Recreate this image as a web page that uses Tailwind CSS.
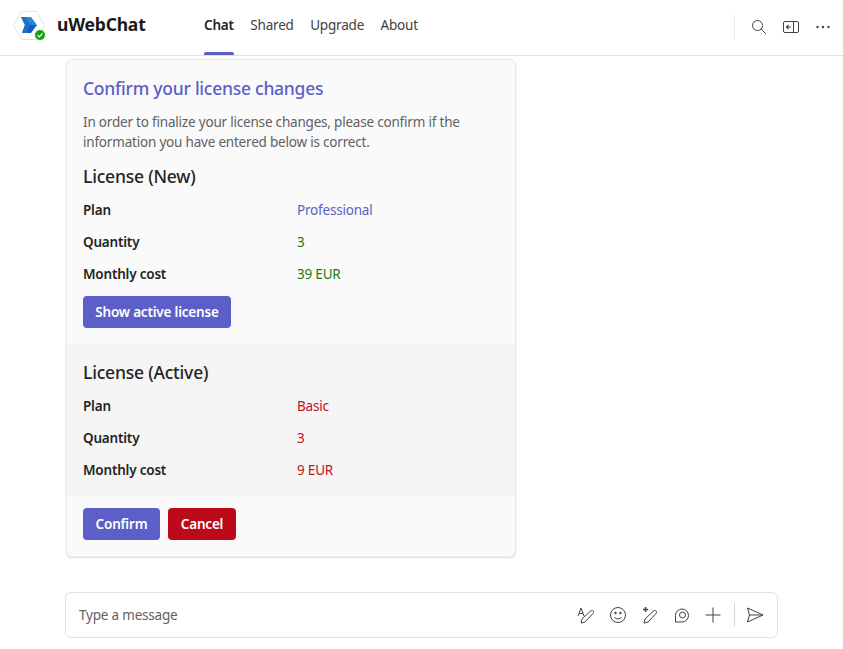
<!DOCTYPE html>
<html lang="en">
<head>
    <meta charset="UTF-8">
    <title>uWebChat</title>
    <script src="https://cdn.jsdelivr.net/npm/@tailwindcss/browser@4"></script>
</head>
<body class="bg-white h-[649px] w-[843px] overflow-hidden font-['Noto_Sans',sans-serif] text-[#242424] text-[13.5px] tracking-[-0.2px]">
    <!-- header -->
    <header class="h-[56px] border-b border-[#e0e0e0] flex items-stretch pl-[13px] pr-[12px]">
        <div class="relative w-[32px] h-[32px] mt-[11px] shrink-0">
            <svg width="32" height="30" viewBox="0 0 32 30">
                <path d="M8.5 0.5H23.5L31.5 14.5L23.5 28.5H8.5L0.5 14.5Z" fill="#fff" stroke="#e3e3e3"/>
                <path d="M8 6H18L24 14H12Z" fill="#2b88d8"/>
                <path d="M12 14H24L18 22H9Z" fill="#185abd"/>
                <path d="M8 6L12 14L9 22H14L17 14L13 6Z" fill="#1f6fc9"/>
            </svg>
            <div class="absolute left-[21px] top-[18px] w-[12px] h-[12px] rounded-full bg-[#13a10e] border border-white flex items-center justify-center">
                <svg width="8" height="8" viewBox="0 0 8 8"><path d="M1.5 4.2L3.3 6L6.5 2.4" fill="none" stroke="#fff" stroke-width="1.2"/></svg>
            </div>
        </div>
        <div class="ml-[12px] mt-[12px] text-[17.5px] leading-[24px] font-bold text-[#1b1a19] w-[147px]">uWebChat</div>
        <nav class="flex gap-[16.5px] text-[#424242]">
            <div class="relative pt-[15px] leading-[20px] font-semibold text-[#242424]">Chat<div class="absolute left-0 right-0 bottom-0 h-[3px] bg-[#5b5fc7] rounded-t-[2px]"></div></div>
            <div class="pt-[15px] leading-[20px]">Shared</div>
            <div class="pt-[15px] leading-[20px]">Upgrade</div>
            <div class="pt-[15px] leading-[20px]">About</div>
        </nav>
        <div class="ml-auto flex items-center gap-[16px] pb-[2px]">
            <div class="w-px h-[24px] bg-[#ebebeb]"></div>
            <svg width="16" height="16" viewBox="0 0 16 16" fill="none" stroke="#424242"><circle cx="6.5" cy="6.5" r="5"/><path d="M10.2 10.2L15 15"/></svg>
            <svg width="16" height="14" viewBox="0 0 16 14" fill="none" stroke="#424242"><rect x="0.5" y="1.5" width="15" height="11" rx="1.5"/><path d="M10.5 1.5V12.5"/><path d="M8 7H3.5M5.5 5L3.5 7L5.5 9" stroke-width="1.2"/></svg>
            <svg width="16" height="16" viewBox="0 0 16 16" fill="#424242"><circle cx="2.5" cy="8" r="1.2"/><circle cx="8" cy="8" r="1.2"/><circle cx="13.5" cy="8" r="1.2"/></svg>
        </div>
    </header>

    <!-- card -->
    <section class="ml-[66px] mt-[3px] w-[450px] h-[498px] rounded-[6px] bg-[#fafafa] border border-[#ebebeb] shadow-[0_1px_2px_rgba(0,0,0,0.14)] overflow-hidden flex flex-col">
        <div class="px-[16px] pt-[16px] h-[284px]">
            <h1 class="text-[17.5px] leading-[24px] font-medium tracking-[-0.25px] text-[#5b5fc7]">Confirm your license changes</h1>
            <p class="mt-[12px] leading-[20px] text-[#616161]">In order to finalize your license changes, please confirm if the<br>information you have entered below is correct.</p>
            <h2 class="mt-[12px] text-[17.5px] leading-[24px] font-medium">License (New)</h2>
            <div class="mt-[10px] grid grid-cols-[214px_1fr] auto-rows-[32px]">
                <div class="font-semibold leading-[24px]">Plan</div><div class="text-[#5b5fc7] leading-[24px]">Professional</div>
                <div class="font-semibold leading-[24px]">Quantity</div><div class="text-[#237b0f] leading-[24px]">3</div>
                <div class="font-semibold leading-[24px]">Monthly cost</div><div class="text-[#237b0f] leading-[24px]">39 EUR</div>
            </div>
            <button class="mt-[2px] h-[32px] w-[148px] rounded-[4px] bg-[#5b5fc7] text-white font-semibold">Show active license</button>
        </div>
        <div class="bg-[#f5f5f5] h-[152px] px-[16px] pt-[16px]">
            <h2 class="text-[17.5px] leading-[24px] font-medium">License (Active)</h2>
            <div class="mt-[10px] grid grid-cols-[214px_1fr] auto-rows-[32px]">
                <div class="font-semibold leading-[24px]">Plan</div><div class="text-[#c50f1f] leading-[24px]">Basic</div>
                <div class="font-semibold leading-[24px]">Quantity</div><div class="text-[#c50f1f] leading-[24px]">3</div>
                <div class="font-semibold leading-[24px]">Monthly cost</div><div class="text-[#c50f1f] leading-[24px]">9 EUR</div>
            </div>
        </div>
        <div class="px-[16px] pt-[12px] flex gap-[8px]">
            <button class="h-[32px] w-[77px] rounded-[4px] bg-[#5b5fc7] text-white font-semibold">Confirm</button>
            <button class="h-[32px] w-[68px] rounded-[4px] bg-[#bc0a1b] text-white font-semibold">Cancel</button>
        </div>
    </section>

    <!-- composer -->
    <div class="ml-[65px] mt-[35px] w-[713px] h-[46px] rounded-[6px] border border-[#e0e0e0] flex items-center pl-[13px] pr-[12px]">
        <span class="text-[#616161]">Type a message</span>
        <div class="ml-auto flex items-center gap-[12px]">
            <svg width="20" height="20" viewBox="-1 0 20 20" fill="none" stroke="#424242"><path d="M1 11L4 3L7 11M2.2 8.5H5.8"/><path d="M4 18L5 14L13.5 6C15.5 4.5 17.5 6.5 16 8.5L8 17Z"/></svg>
            <svg width="20" height="20" viewBox="0 0 20 20" fill="none" stroke="#424242"><circle cx="10" cy="10" r="7.5"/><path d="M6.5 12C8 14.5 12 14.5 13.5 12"/><circle cx="7.5" cy="8" r="0.8" fill="#424242"/><circle cx="12.5" cy="8" r="0.8" fill="#424242"/></svg>
            <svg width="20" height="20" viewBox="0 0 20 20" fill="none" stroke="#424242"><path d="M4 18L5 14L13.5 6C15.5 4.5 17.5 6.5 16 8.5L8 17Z"/><path d="M5.5 2V7M3 4.5H8" stroke-width="1.5"/></svg>
            <svg width="20" height="20" viewBox="0 0 20 20" fill="none" stroke="#424242"><path d="M3.5 17V10.5A6.5 6.5 0 1 1 10 17Z"/><circle cx="10.5" cy="10" r="3"/></svg>
            <svg width="20" height="20" viewBox="0 0 20 20" fill="none" stroke="#424242" class="-ml-[1px]"><path d="M10 2.5V17.5M2.5 10H17.5"/></svg>
            <div class="w-px h-[24px] bg-[#d6d6d6] -ml-[1px]"></div>
            <svg width="20" height="20" viewBox="0 0 20 20" fill="none" stroke="#424242" class="-ml-[2px]"><path d="M2.5 3L18 10L2.5 17L4.5 10Z"/><path d="M4.5 10H18"/></svg>
        </div>
    </div>
</body>
</html>
